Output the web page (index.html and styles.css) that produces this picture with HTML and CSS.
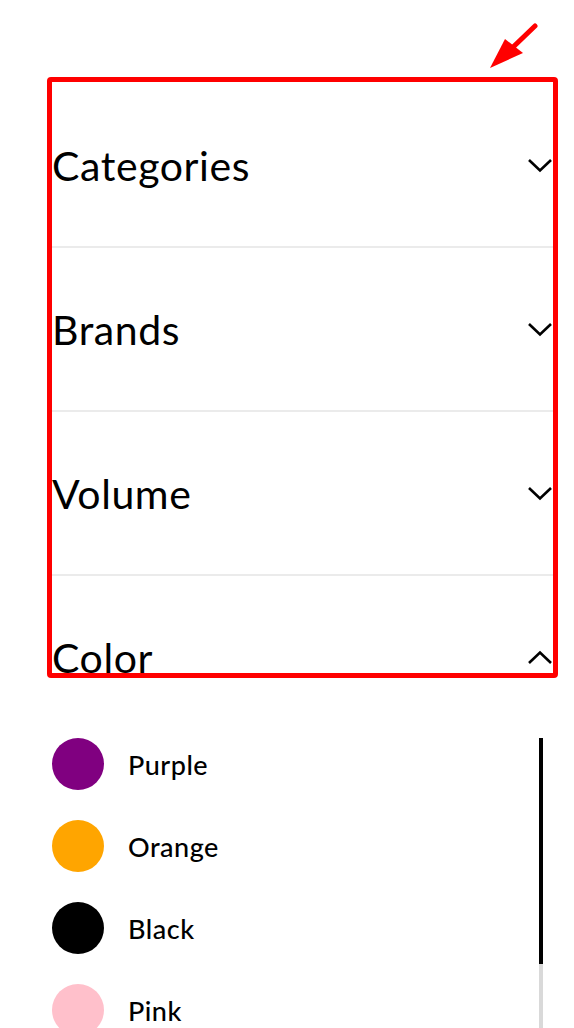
FILE: index.html
```html
<!DOCTYPE html>
<html lang="en">
<head>
  <meta charset="UTF-8">
  <meta name="viewport" content="width=device-width, initial-scale=1.0">
  <title>Filters</title>
  <link rel="stylesheet" href="styles.css">
</head>
<body>
  <div class="page">
    <!-- Filter accordion -->
    <div class="accordion">
      <div class="acc-item">
        <span class="acc-title">Categories</span>
        <svg class="chevron" viewBox="0 0 26 15"><polyline points="2,2 13,12.5 24,2"/></svg>
      </div>
      <div class="acc-item">
        <span class="acc-title">Brands</span>
        <svg class="chevron" viewBox="0 0 26 15"><polyline points="2,2 13,12.5 24,2"/></svg>
      </div>
      <div class="acc-item">
        <span class="acc-title">Volume</span>
        <svg class="chevron" viewBox="0 0 26 15"><polyline points="2,2 13,12.5 24,2"/></svg>
      </div>
      <div class="acc-item open">
        <span class="acc-title">Color</span>
        <svg class="chevron" viewBox="0 0 26 15"><polyline points="2,13 13,2.5 24,13"/></svg>
      </div>
    </div>

    <!-- Color options -->
    <div class="color-panel">
      <ul class="swatches">
        <li><span class="dot" style="background:#800080"></span>Purple</li>
        <li><span class="dot" style="background:#ffa500"></span>Orange</li>
        <li><span class="dot" style="background:#000000"></span>Black</li>
        <li><span class="dot" style="background:#ffc0cb"></span>Pink</li>
      </ul>
      <div class="track"><div class="thumb"></div></div>
    </div>
  </div>

  <!-- Annotation -->
  <div class="highlight"></div>
  <svg class="pointer" viewBox="0 0 60 60">
    <line x1="45" y1="5" x2="18" y2="31"/>
    <polygon points="0,47 15,18 33,32"/>
  </svg>
</body>
</html>
```

FILE: styles.css
```css
body {
  margin: 0;
  font-family: Lato, "Liberation Sans", sans-serif;
  color: #000;
  background: #fff;
  overflow: hidden;
}
.page {
  padding: 84px 21px 0 52px;
}
.acc-item {
  height: 162px;
  display: flex;
  align-items: center;
  justify-content: space-between;
  border-bottom: 2px solid #ebebeb;
}
.acc-item.open {
  border-bottom: none;
}
.acc-title {
  font-size: 41px;
  font-weight: 400;
  letter-spacing: 0.6px;
}
.chevron {
  width: 26px;
  height: 15px;
  fill: none;
  stroke: #000;
  stroke-width: 2.6;
}
.color-panel {
  display: flex;
  align-items: flex-start;
}
.swatches {
  flex: 1;
  list-style: none;
  margin: 0;
  padding: 0;
}
.swatches li {
  display: flex;
  align-items: center;
  height: 52px;
  margin-bottom: 30px;
  font-size: 27px;
  font-weight: 500;
  letter-spacing: 0.5px;
}
.dot {
  width: 52px;
  height: 52px;
  border-radius: 50%;
  margin-right: 24px;
}
.track {
  width: 4px;
  height: 400px;
  margin-right: 10px;
  background: #d9d9d9;
}
.thumb {
  height: 226px;
  background: #000;
}
.highlight {
  position: absolute;
  left: 47px;
  top: 77px;
  width: 511px;
  height: 601px;
  box-sizing: border-box;
  border: 5px solid #ff0000;
  border-radius: 4px;
}
.pointer {
  position: absolute;
  left: 490px;
  top: 21px;
  width: 60px;
  height: 60px;
}
.pointer line {
  stroke: #ff0000;
  stroke-width: 5;
  stroke-linecap: round;
}
.pointer polygon {
  fill: #ff0000;
}
```
